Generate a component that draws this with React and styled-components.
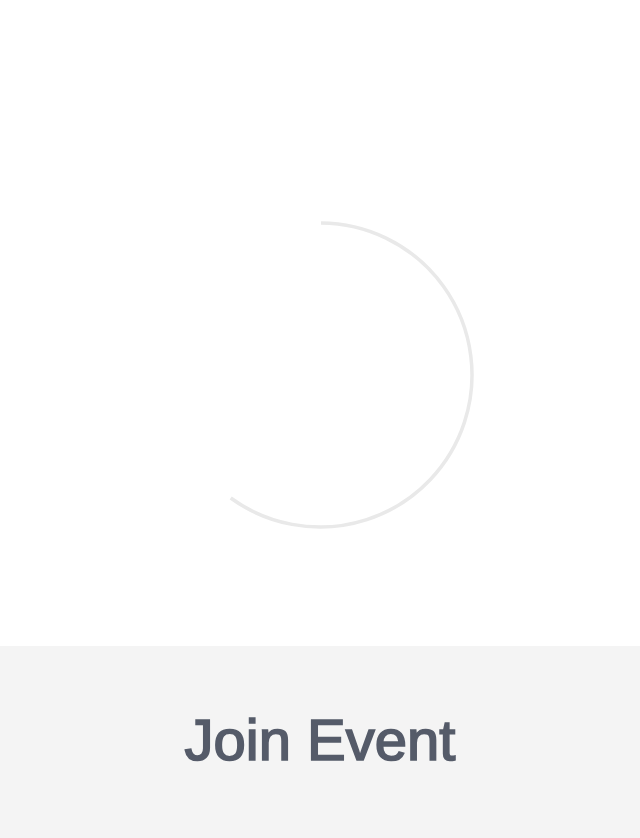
import React from 'react';
import styled, { createGlobalStyle } from 'styled-components';

const GlobalStyle = createGlobalStyle`
    html, body {
        margin: 0;
        padding: 0;
        background: #ffffff;
        font-family: "Liberation Sans", Arial, sans-serif;
    }
`;

const Page = styled.div`
    width: 640px;
    height: 838px;
    display: flex;
    flex-direction: column;
`;

const Stage = styled.div`
    height: 646px;
    display: flex;
    justify-content: center;
    padding-top: 220px;
    box-sizing: border-box;
`;

const Spinner = styled.svg`
    width: 310px;
    height: 310px;
    display: block;
`;

const Footer = styled.div`
    flex: 1;
    background: #f4f4f4;
    display: flex;
    align-items: center;
    justify-content: center;
`;

const JoinButton = styled.button`
    border: none;
    background: none;
    padding: 0;
    margin-top: -6px;
    font-family: "Liberation Sans", Arial, sans-serif;
    font-size: 58px;
    font-weight: 400;
    color: #555b69;
    -webkit-text-stroke: 1.7px #555b69;
    cursor: pointer;
`;

const App = () => {
    return (
        <>
            <GlobalStyle />
            <Page>
                <Stage>
                    <Spinner viewBox="0 0 310 310">
                        <path
                            d="M 156 3 A 152 152 0 1 1 65.7 278"
                            fill="none"
                            stroke="#e9e9e9"
                            strokeWidth="3.5"
                        />
                    </Spinner>
                </Stage>
                <Footer>
                    <JoinButton>Join Event</JoinButton>
                </Footer>
            </Page>
        </>
    );
};

export default App;
